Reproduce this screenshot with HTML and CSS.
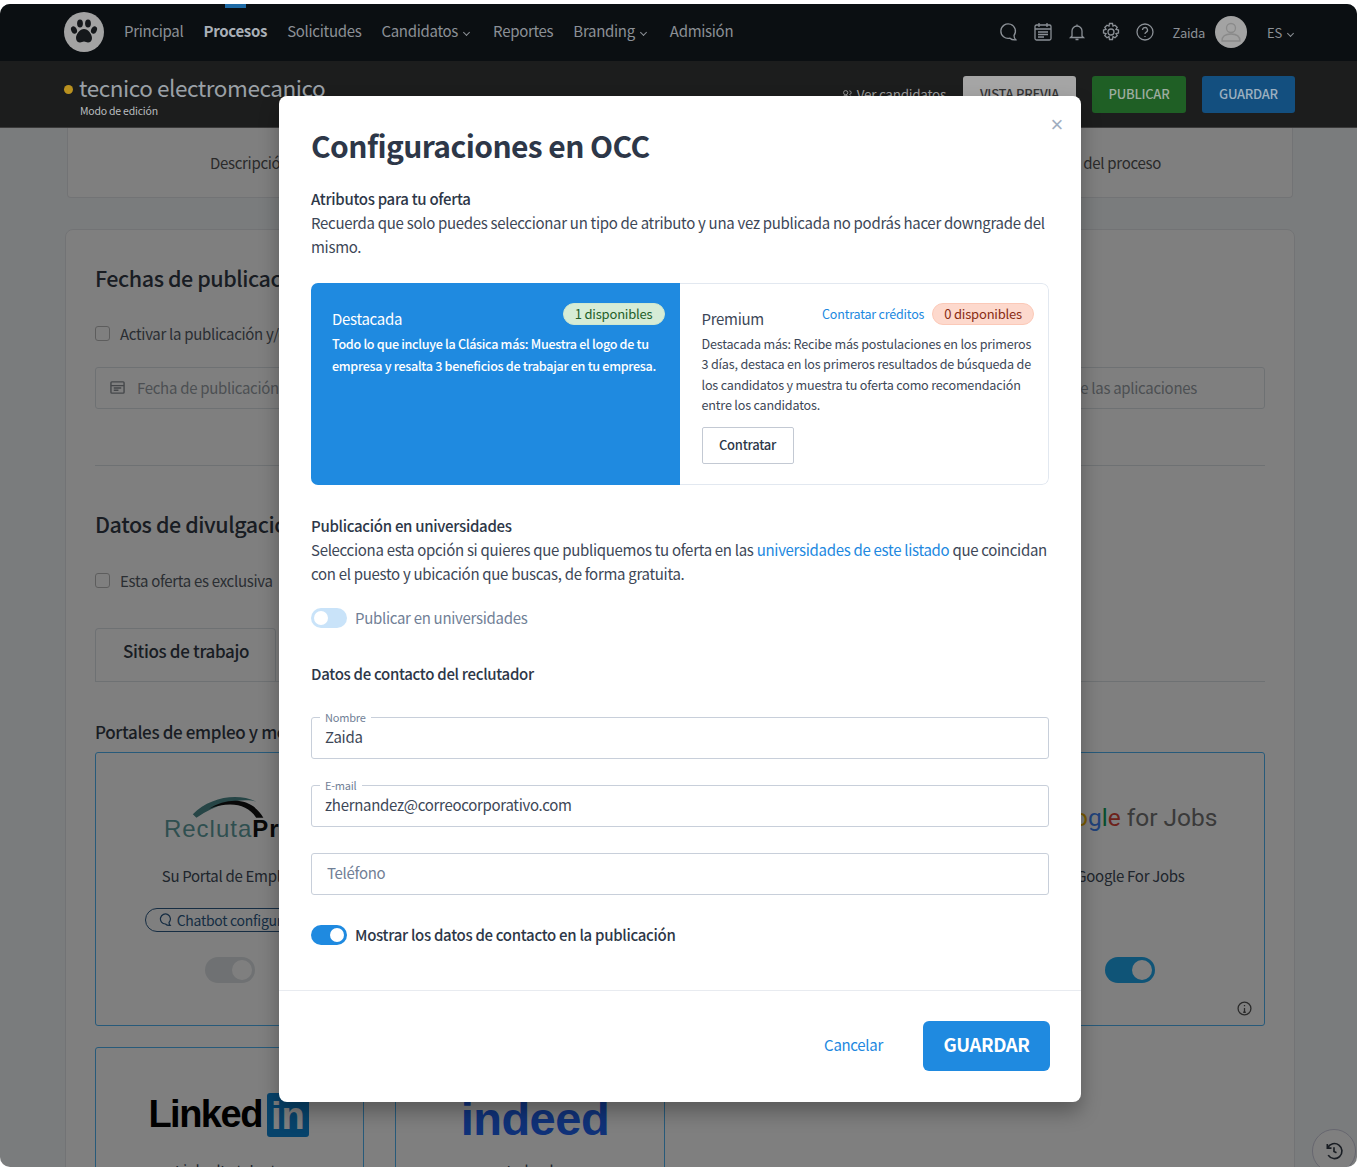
FILE: index.html
```html
<!DOCTYPE html>
<html lang="es">
<head>
<meta charset="utf-8">
<title>Configuraciones en OCC</title>
<link rel="stylesheet" href="styles.css">
</head>
<body>
<div class="app">
  <nav class="nav">
    <span class="nav-indicator"></span>
    <div class="brand">
      <svg viewBox="0 0 40 40" width="40" height="40"><circle cx="20" cy="20" r="20" fill="#a3a3a3"/><g fill="#15181b"><ellipse cx="10" cy="18" rx="2.8" ry="3.8" transform="rotate(-25 10 18)"/><ellipse cx="16" cy="11.5" rx="2.9" ry="4"/><ellipse cx="24" cy="11.5" rx="2.9" ry="4"/><ellipse cx="30" cy="18" rx="2.8" ry="3.8" transform="rotate(25 30 18)"/><path d="M20 17c-4 0-8 5-8 9 0 3 2 4.500 4 4.500 1.500 0 2.500-1 4-1s2.500 1 4 1c2 0 4-1.500 4-4.500 0-4-4-9-8-9z"/></g></svg>
    </div>
    <div class="menu">
      <span>Principal</span><span class="menu-active">Procesos</span><span>Solicitudes</span>
      <span>Candidatos<i class="chev"></i></span><span>Reportes</span><span>Branding<i class="chev"></i></span><span>Admisión</span>
    </div>
    <div class="nav-right">
      <svg class="nav-icon" viewBox="0 0 20 20"><path d="M11 16.200A7.300 7.300 0 1 1 15 13.500c0 1.500.6 3 1.800 4.300-2.300.2-4.500-.2-5.800-1.600z"/></svg>
      <svg class="nav-icon" viewBox="0 0 20 20"><rect x="2" y="3" width="16" height="15" rx="1.500"/><path d="M6 1v4M14 1v4M2 7h16M5 10h10M5 12.500h10M5 15h6"/></svg>
      <svg class="nav-icon" viewBox="0 0 20 20"><path d="M5 14V9a5 5 0 0 1 10 0v5l1.500 1.500h-13zM8.500 17.500h3M10 2.500v1.500"/></svg>
      <svg class="nav-icon" viewBox="0 0 20 20"><circle cx="10" cy="10" r="3"/><path d="M8.500 1.500h3l.5 2.500 2-.8 2.200 2.200-1.200 2 2.500.6v3l-2.500.6 1.200 2-2.200 2.200-2-1.200-.5 2.900h-3l-.5-2.900-2 1.200-2.200-2.200 1.200-2-2.500-.6v-3l2.500-.6-1.200-2 2.200-2.200 2 .8z"/></svg>
      <svg class="nav-icon" viewBox="0 0 20 20"><circle cx="10" cy="10" r="8"/><path d="M7.500 8a2.500 2.500 0 1 1 3.500 2.300c-.7.4-1 .9-1 1.700M10 14v1"/></svg>
      <span class="user">Zaida</span>
      <svg class="avatar" viewBox="0 0 32 32"><circle cx="16" cy="16" r="16" fill="#a3a3a3"/><circle cx="16" cy="12" r="4.500" fill="none" stroke="#8a8a8a" stroke-width="1.300"/><path d="M7 25c0-5 4-7 9-7s9 2 9 7z" fill="none" stroke="#8a8a8a" stroke-width="1.300"/></svg>
      <span class="lang">ES<i class="chev"></i></span>
    </div>
  </nav>
  <header class="subbar">
    <div class="subbar-title">
      <div class="process-name"><span class="dot"></span>tecnico electromecanico</div>
      <div class="process-mode">Modo de edición</div>
    </div>
    <div class="subbar-actions">
      <span class="see-link"><svg class="see-icon" viewBox="0 0 12 12"><circle cx="4" cy="4" r="2.300"/><path d="M.5 11c0-3 1.500-4 3.500-4s3.500 1 3.500 4zM8 2a2 2 0 0 1 0 4M9 7.500c1.500.3 2.500 1.300 2.500 3.500"/></svg>Ver candidatos</span>
      <span class="btn btn-grey">VISTA PREVIA</span>
      <span class="btn btn-green">PUBLICAR</span>
      <span class="btn btn-blue">GUARDAR</span>
    </div>
  </header>
  <main class="page">
    <div class="tabs-card">
      <span class="tabs-left">Descripción</span>
      <span class="tabs-right">del proceso</span>
    </div>
    <section class="main-card">
      <h2 class="bg-title">Fechas de publicación</h2>
      <label class="check-row"><span class="check"></span>Activar la publicación y/o</label>
      <div class="date-field">
        <span class="date-left"><svg class="cal" viewBox="0 0 16 16"><rect x="1" y="2" width="14" height="12" rx="1"/><path d="M1 6h14M4 8.500h8M4 11h5"/></svg>Fecha de publicación</span>
        <span>Fecha de cierre de las aplicaciones</span>
      </div>
      <hr class="bg-rule">
      <h2 class="bg-title">Datos de divulgación</h2>
      <label class="check-row check-row-low"><span class="check"></span>Esta oferta es exclusiva</label>
      <div class="bg-tabs"><span class="bg-tab">Sitios de trabajo</span></div>
      <h3 class="bg-sub">Portales de empleo y medios</h3>
      <div class="portal-grid">
        <article class="portal">
          <div class="portal-logo">
            <svg class="recluta-arc" viewBox="0 0 84 26"><path d="M2 22C20 4 50-2 72 8 60 5 36 6 6 26z" fill="#4d8b8d"/><path d="M20 16C40 4 66 2 80 26h-8C62 10 42 8 20 16z" fill="#111"/></svg>
            <span class="recluta"><span class="recluta-a">Recluta</span><b>Pro</b></span>
          </div>
          <p class="portal-name">Su Portal de Empleo</p>
          <span class="pill"><svg class="pill-icon" viewBox="0 0 14 14"><path d="M7.500 11A5 5 0 1 1 11 9.500c0 1 .4 2 1.200 2.800-1.700.2-3.500-.1-4.700-1.300z"/></svg>Chatbot configurado</span>
          <span class="switch switch-off"></span>
        </article>
        <article class="portal"></article>
        <article class="portal"></article>
        <article class="portal">
          <div class="portal-logo google"><span class="g-b">G</span><span class="g-r">o</span><span class="g-y">o</span><span class="g-b">g</span><span class="g-g">l</span><span class="g-r">e</span><span class="g-rest"> for Jobs</span></div>
          <p class="portal-name">Google For Jobs</p>
          <span class="pill-space"></span>
          <span class="switch switch-on"></span>
          <svg class="info" viewBox="0 0 14 14"><circle cx="7" cy="7" r="6"/><path d="M7 6.500v4M5.800 10.500h2.400M7 3.800v1"/></svg>
        </article>
        <article class="portal">
          <div class="portal-logo linkedin"><span class="li-text">Linked</span><span class="li-box">in</span></div>
          <p class="portal-name">LinkedIn talento</p>
        </article>
        <article class="portal">
          <div class="portal-logo indeed">indeed</div>
          <p class="portal-name">Indeed</p>
        </article>
      </div>
    </section>
    <span class="history"><svg viewBox="0 0 24 24"><path d="M4.500 8A9 9 0 1 1 5 17M4 3.500V8.500h5M12 7.500V12.500l3 1.500"/></svg></span>
  </main>
  <div class="backdrop"></div>
</div>

<div class="modal">
  <span class="close">×</span>
  <div class="modal-body">
    <h1 class="modal-title">Configuraciones en OCC</h1>
    <div class="block">
      <div class="strong">Atributos para tu oferta</div>
      <p>Recuerda que solo puedes seleccionar un tipo de atributo y una vez publicada no podrás hacer downgrade del mismo.</p>
    </div>
    <div class="attrs">
      <div class="attr attr-sel">
        <div class="attr-head">
          <span class="attr-name">Destacada</span>
          <span class="badge badge-green">1 disponibles</span>
        </div>
        <p class="attr-text attr-text-sel">Todo lo que incluye la Clásica más: Muestra el logo de tu empresa y resalta 3 beneficios de trabajar en tu empresa.</p>
      </div>
      <div class="attr attr-plain">
        <div class="attr-head">
          <span class="attr-name">Premium</span>
          <span class="attr-side"><span class="credit">Contratar créditos</span><span class="badge badge-red">0 disponibles</span></span>
        </div>
        <p class="attr-text">Destacada más: Recibe más postulaciones en los primeros 3 días, destaca en los primeros resultados de búsqueda de los candidatos y muestra tu oferta como recomendación entre los candidatos.</p>
        <span class="hire">Contratar</span>
      </div>
    </div>
    <div class="block">
      <div class="strong">Publicación en universidades</div>
      <p>Selecciona esta opción si quieres que publiquemos tu oferta en las <span class="link">universidades de este listado</span> que coincidan con el puesto y ubicación que buscas, de forma gratuita.</p>
    </div>
    <div class="toggle-row toggle-uni"><span class="toggle toggle-off"></span><span class="toggle-muted">Publicar en universidades</span></div>
    <div class="strong contact-head">Datos de contacto del reclutador</div>
    <div class="fields">
      <div class="field"><span class="legend">Nombre</span>Zaida</div>
      <div class="field"><span class="legend">E-mail</span>zhernandez@correocorporativo.com</div>
      <div class="field field-empty">Teléfono</div>
    </div>
    <div class="toggle-row toggle-show"><span class="toggle toggle-on"></span><span class="toggle-strong">Mostrar los datos de contacto en la publicación</span></div>
  </div>
  <div class="modal-foot">
    <span class="cancel">Cancelar</span>
    <span class="save">GUARDAR</span>
  </div>
</div>
</body>
</html>
```
FILE: styles.css
```css
* { box-sizing: border-box; letter-spacing: -.02em; }
html, body { margin: 0; height: 1167px; overflow: hidden; background: #fff; }
body {
  font-family: "Noto Sans CJK SC", "Noto Sans", sans-serif;
  font-size: 15px;
  color: #3d4757;
  padding-top: 4px;
  position: relative;
}
p, h1, h2, h3 { margin: 0; }

.app {
  position: relative;
  height: 1163px;
  border-radius: 10px;
  overflow: hidden;
  background: #f5f8fa;
  display: flex;
  flex-direction: column;
}

.nav {
  position: relative;
  z-index: 2;
  height: 57px;
  flex: none;
  background: #0b0f12;
  display: flex;
  align-items: center;
  padding: 0 64px;
  color: #8b9096;
}
.nav-indicator { position: absolute; left: 225px; top: 0; width: 21px; height: 4px; background: #1d6aa5; }
.brand { display: flex; margin-right: 20px; margin-top: -1px; }
.menu { display: flex; gap: 20px; font-size: 15px; line-height: 20px; margin-top: -4px; }
.menu-active { font-weight: 700; color: #a9b0b7; }
.chev {
  display: inline-block; width: 5px; height: 5px; margin: 0 4px 2px 6px;
  border-right: 1px solid currentColor; border-bottom: 1px solid currentColor;
  transform: rotate(45deg);
}
.nav-right { margin-left: auto; display: flex; align-items: center; margin-right: -8px; }
.nav-icon { width: 20px; height: 20px; margin-right: 14px; margin-top: -2px; fill: none; stroke: #8b9096; stroke-width: 1.300; }
.user { font-size: 13px; margin-left: 4px; margin-right: 10px; }
.avatar { width: 32px; height: 32px; margin-right: 20px; margin-top: -1px; }
.lang { font-size: 13px; margin-right: 4px; }

.subbar {
  position: relative;
  z-index: 2;
  height: 67px;
  flex: none;
  background: #1c1d1d;
  display: flex;
  justify-content: space-between;
  padding: 8px 62px 0 64px;
  border-bottom: 1px solid #3a3a3a;
}
.process-name { font-size: 22.500px; line-height: 36px; color: #9aa0a6; display: flex; align-items: center; }
.dot { width: 9px; height: 9px; border-radius: 50%; background: #b9911f; margin-right: 6px; margin-top: 4px; }
.process-mode { font-size: 10.500px; line-height: 14px; color: #b9bcbf; margin-left: 16px; margin-top: -1px; }
.subbar-actions { display: flex; align-items: flex-start; gap: 16px; padding-top: 7px; }
.see-link { font-size: 13.500px; line-height: 37px; color: #9a9a9a; margin-right: 1px; display: flex; align-items: center; gap: 4px; }
.see-icon { width: 11px; height: 11px; fill: none; stroke: #9a9a9a; stroke-width: 1; }
.btn { height: 37px; line-height: 35px; border-radius: 3px; font-size: 13px; font-weight: 500; white-space: nowrap; text-align: center; }
.btn-grey { width: 113px; background: #a5a5a5; color: #333; }
.btn-green { width: 94px; background: #1f5f25; color: #9dac9f; }
.btn-blue { width: 93px; background: #134f7f; color: #9cafbf; }

.page { flex: 1; position: relative; padding: 0 62px 0 65px; }
.tabs-card {
  height: 70px;
  margin: 0 2px 31px 2px;
  background: #fff;
  border: 1px solid #e4e7ea;
  border-top: 0;
  border-radius: 0 0 4px 4px;
  display: flex;
  justify-content: space-between;
  align-items: center;
  padding: 0 131px 0 142px;
  color: #555;
}
.main-card {
  background: #fff;
  border: 1px solid #e4e7ea;
  border-radius: 8px;
  padding: 30px 29px 0 29px;
  height: 960px;
}
.bg-title { font-size: 21.500px; line-height: 36px; font-weight: 500; color: #333b47; }
.check-row { display: flex; align-items: center; gap: 10px; margin-top: 25px; height: 24px; color: #555c66; }
.check-row-low { margin-top: 26px; }
.check { width: 15px; height: 15px; border: 1px solid #bbb; border-radius: 3px; background: #fff; }
.date-field {
  height: 42px; margin-top: 22px;
  border: 1px solid #dde2e7; border-radius: 3px;
  display: flex; justify-content: space-between; align-items: center;
  padding: 0 67px 2px 14px; color: #999fa6;
}
.date-left { display: flex; align-items: center; gap: 12px; }
.cal { width: 15px; height: 15px; fill: none; stroke: #8a8f95; stroke-width: 1.500; }
.bg-rule { border: 0; border-top: 1px solid #dde2e7; margin: 56px 0 40px; }
.bg-tabs { height: 54px; margin-top: 36px; border-bottom: 1px solid #dde2e7; }
.bg-tab {
  display: inline-block; width: 181px; height: 54px; padding: 9px 27px;
  border: 1px solid #dde2e7; border-bottom: 0; border-radius: 4px 4px 0 0;
  font-size: 17px; font-weight: 500; color: #333b47; line-height: 26px; white-space: nowrap;
}
.bg-sub { font-size: 17px; font-weight: 500; line-height: 26px; margin-top: 37px; color: #333b47; }
.portal-grid { display: grid; grid-template-columns: repeat(4, 1fr); gap: 21px 31px; margin-top: 7px; }
.portal {
  position: relative;
  height: 274px;
  border: 1.500px solid #4fb4f5;
  border-radius: 3px;
  display: flex; flex-direction: column; align-items: center;
  background: #fff;
}
.portal-logo { height: 93px; margin-top: 18px; display: flex; align-items: center; position: relative; white-space: nowrap; }
.portal-name { font-size: 15px; line-height: 24px; height: 24px; color: #404a58; flex: none; }
.recluta { font-family: "Liberation Sans", sans-serif; font-size: 24px; letter-spacing: 1px; margin-top: 23px; }
.recluta-a { color: #5f9ea0; letter-spacing: 1px; }
.recluta b { color: #111; letter-spacing: 1px; }
.recluta-arc { position: absolute; left: 27px; top: 23px; width: 76px; height: 24px; }
.pill {
  margin-top: 20px; height: 24px; width: 170px; flex: none;
  border: 1.500px solid #2c5a86; border-radius: 12px;
  font-size: 14px; line-height: 21px; padding-left: 12px; display: flex; align-items: center; gap: 5px; color: #2c5a86; white-space: nowrap;
}
.pill-icon { width: 14px; height: 14px; fill: none; stroke: #2c5a86; stroke-width: 1.200; }
.pill-space { display: block; height: 44px; flex: none; }
.switch { width: 50px; height: 26px; border-radius: 13px; margin-top: 25px; position: relative; flex: none; }
.switch::after { content: ""; position: absolute; right: 3px; top: 3px; width: 20px; height: 20px; border-radius: 50%; background: #fff; }
.switch-off { background: #dfe3e6; }
.switch-on { background: #1fa8ee; }
.info { position: absolute; right: 12px; bottom: 9px; width: 15px; height: 15px; fill: none; stroke: #555; stroke-width: 1.200; }
.google { font-family: Roboto, "Liberation Sans", sans-serif; font-size: 24.500px; }
.google span { letter-spacing: 0; }
.g-b { color: #4285f4; } .g-r { color: #db4437; } .g-y { color: #f4b400; } .g-g { color: #0f9d58; }
.g-rest { color: #757575; white-space: pre; }
.linkedin { font-family: "Liberation Sans", sans-serif; font-weight: 700; font-size: 38px; color: #000; gap: 5px; margin-left: -2px; padding-top: 4px; }
.li-text { letter-spacing: -1.500px; }
.li-box { display: inline-block; background: #0f86d6; color: #fff; width: 42px; height: 44px; line-height: 46px; text-align: center; border-radius: 3px; letter-spacing: 0; }
.indeed { font-family: "Liberation Sans", sans-serif; font-weight: 700; font-size: 47px; letter-spacing: -.5px; color: #2164f3; margin-top: 29px; height: 82px; margin-left: 10px; }
.history {
  position: absolute; z-index: 1; right: 1px; top: 1001px; width: 44px; height: 44px;
  border: 1px solid #ccd; border-radius: 50%; background: #fff;
  display: flex; align-items: center; justify-content: center;
}
.history svg { width: 20px; height: 20px; fill: none; stroke: #333b47; stroke-width: 2; }

.backdrop { position: absolute; inset: 0; z-index: 1; background: rgba(0, 0, 0, .5); }

.modal {
  position: absolute; z-index: 5;
  left: 279px; top: 96px; width: 802px; height: 1006px;
  background: #fff; border-radius: 8px;
  box-shadow: 0 10px 20px rgba(0, 0, 0, .3);
  display: flex; flex-direction: column;
}
.close { position: absolute; right: 18px; top: 13px; font-size: 22px; line-height: 32px; font-family: "Liberation Sans", sans-serif; color: #a0aec0; }
.modal-body { flex: 1; padding: 26px 32px 0; }
.modal-title { font-size: 30px; line-height: 46px; font-weight: 700; color: #2d3748; margin-bottom: 19px; }
.block { line-height: 24px; }
.strong { font-weight: 500; color: #2d3748; }
.attrs {
  display: flex; height: 202px; margin: 24px 0 29px;
  border-radius: 7px; overflow: hidden;
}
.attr { flex: 1; padding: 20px 15px 0 21px; min-width: 0; }
.attr-plain {
  border: 1.500px solid #e2e8f0; border-left: 0; border-radius: 0 7px 7px 0;
  padding: 18.500px 14px 0 22px;
}
.attr-sel { background: #1f8ae0; color: #fff; }
.attr-head { display: flex; justify-content: space-between; align-items: center; height: 22px; }
.attr-name { font-size: 15px; margin-top: 9px; color: inherit; }
.attr-side { display: flex; align-items: center; gap: 8px; }
.credit { font-size: 12.500px; color: #2188e0; letter-spacing: -.015em; }
.badge { font-size: 13px; line-height: 19px; height: 22px; padding: 0 11px; border-radius: 11px; border: 1px solid; letter-spacing: -.015em; }
.badge-green { background: #d6ecd6; border-color: #cfe8cf; color: #24602a; }
.badge-red { background: #fdd9cd; border-color: #fbc9b8; color: #8a2d14; }
.attr-text { font-size: 12.600px; line-height: 20.500px; margin-top: 9px; color: #3d4757; letter-spacing: -.015em; }
.attr-text-sel { font-size: 12.600px; font-weight: 500; color: #fff; line-height: 22px; letter-spacing: -.025em; margin-top: 8px; }
.hire {
  display: inline-block; width: 92px; height: 37px; margin-top: 11px;
  border: 1px solid #c3c9d3; border-radius: 2px; text-align: center;
  line-height: 34px; font-size: 13px; font-weight: 500; color: #2d3748;
}
.link { color: #2188e0; }
.toggle-row { display: flex; align-items: center; gap: 8px; line-height: 24px; }
.toggle-uni { margin-top: 20px; }
.toggle { display: block; width: 36px; height: 20px; border-radius: 10px; position: relative; flex: none; }
.toggle::after { content: ""; position: absolute; top: 3px; width: 14px; height: 14px; border-radius: 50%; background: #fff; }
.toggle-off { background: #c9e3f9; }
.toggle-off::after { left: 3px; }
.toggle-on { background: #1f8ae0; }
.toggle-on::after { right: 3px; }
.toggle-muted { color: #718096; }
.toggle-strong { font-weight: 500; color: #2d3748; }
.contact-head { margin-top: 32px; line-height: 24px; }
.fields { display: flex; flex-direction: column; gap: 26px; margin-top: 31px; }
.field {
  position: relative; height: 42px; padding: 0 13px;
  border: 1.500px solid #c8cfda; border-radius: 3px;
  line-height: 38px; color: #3d4757;
}
.field-empty { color: #718096; padding-left: 15px; }
.legend { position: absolute; left: 8px; top: -8px; padding: 0 5px; background: #fff; font-size: 11px; line-height: 14px; color: #718096; }
.toggle-show { margin-top: 28px; }
.modal-foot {
  height: 112px; flex: none;
  border-top: 1px solid #e8ebf0;
  display: flex; justify-content: flex-end; align-items: center;
  gap: 40px; padding: 0 31px 2px;
}
.cancel { color: #2188e0; margin-top: -2px; }
.save {
  width: 127px; height: 50px; line-height: 47px; border-radius: 6px;
  background: #1f8ae0; color: #fff; text-align: center; font-size: 18.500px; font-weight: 700;
}
```
